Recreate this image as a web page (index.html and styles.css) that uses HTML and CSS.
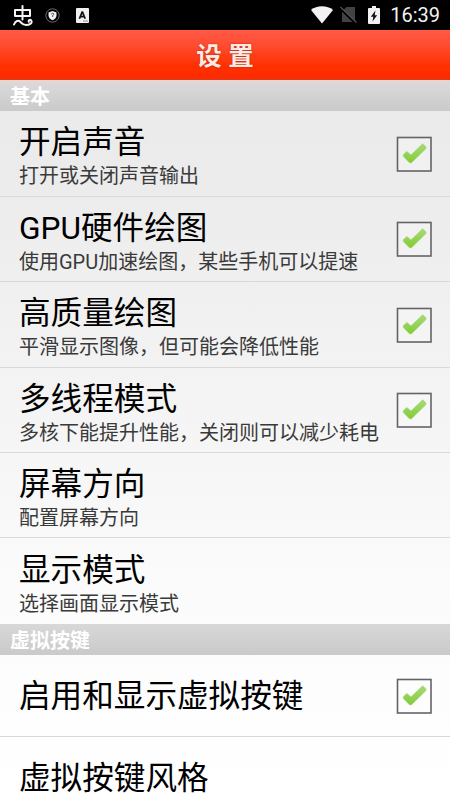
FILE: index.html
```html
<!DOCTYPE html>
<html lang="zh-CN">
<head>
<meta charset="utf-8">
<title>设置</title>
<link rel="stylesheet" href="styles.css">
</head>
<body>
<svg width="0" height="0" class="defs" aria-hidden="true">
  <defs>
    <linearGradient id="green" x1="0" y1="0" x2="0" y2="1">
      <stop offset="0" stop-color="#a9d97c"/><stop offset="1" stop-color="#82cc35"/>
    </linearGradient>
    <symbol id="check" viewBox="0 0 36 36">
      <rect x="1.5" y="1.500" width="33.500" height="33.500" fill="#fff" fill-opacity=".25" stroke="#646468" stroke-width="1.600"/>
      <path d="M7.300 18.700 10.800 15.400 15 18.900 26.700 7.700 30.100 10.900 29.800 12.700 15.300 26.900 13.400 26.700 7.400 20.600Z" fill="url(#green)" stroke="#9bd663" stroke-width=".6" stroke-linejoin="round"/>
    </symbol>
  </defs>
</svg>
<div class="statusbar">
  <svg class="bug" viewBox="0 0 21 22" fill="none" stroke="#f4f4f4" stroke-width="2" stroke-linecap="round" stroke-linejoin="round">
    <path d="M3 6H18V12H3ZM10.500 2V15.500M2 20.500C3.500 16.500 6.500 16 8.500 18C10.200 19.800 11 21 14 21C17.500 21 20.300 19.500 19.500 17C18.800 15 16 15.800 16.800 17.800"/>
  </svg>
  <svg class="shield" viewBox="0 0 15 15">
    <circle cx="7.500" cy="7.500" r="6.700" fill="none" stroke="#777" stroke-width=".9"/>
    <path d="M3.500 4.500 7.500 3 11.500 4.500V7.500C11.500 9.800 9.600 11.300 7.500 12.300C5.400 11.300 3.500 9.800 3.500 7.500Z" fill="#f2f2f2"/>
    <path d="M6.500 6.300A1.100 1.100 0 1 1 7.700 7.300V9" fill="none" stroke="#333" stroke-width=".8"/>
  </svg>
  <svg class="abox" viewBox="0 0 13 15">
    <rect width="13" height="15" rx="1" fill="#f0f0f0"/>
    <path d="M3.400 10.800 6.100 4.200H6.500L9.200 10.800M4.500 8.700H8.100" fill="none" stroke="#111" stroke-width="1.700"/>
    <path d="M7 13H12" stroke="#777" stroke-width=".8"/>
  </svg>
  <svg class="wifi" viewBox="0 0 22 18"><path d="M0 4C5.500-1 16.500-1 22 4L11 17.500Z" fill="#f2f2f2"/></svg>
  <svg class="nosim" viewBox="0 0 17 18">
    <path d="M2 5.500 6.500 1H15V16H2Z" fill="#424242"/>
    <path d="M0 2 16 17.500" stroke="#000" stroke-width="2.600"/>
    <path d="M.5 1 16.500 16.500" stroke="#555" stroke-width="1.200"/>
  </svg>
  <svg class="battery" viewBox="0 0 12 18">
    <path d="M4 0H8V2H11Q12 2 12 3V17Q12 18 11 18H1Q0 18 0 17V3Q0 2 1 2H4Z" fill="#f2f2f2"/>
    <path d="M7.500 4.500 2.800 10.700H5.300L4.500 15.500 9.200 9.300H6.700Z" fill="#111"/>
  </svg>
  <span class="clock">16:39</span>
</div>
<header class="titlebar">设 置</header>
<main class="settings">
  <h2 class="section first">基本</h2>
  <div class="row"><div class="text"><div class="name">开启声音</div><div class="hint">打开或关闭声音输出</div></div><svg class="box"><use href="#check"/></svg></div>
  <div class="row"><div class="text"><div class="name">GPU硬件绘图</div><div class="hint">使用GPU加速绘图，某些手机可以提速</div></div><svg class="box"><use href="#check"/></svg></div>
  <div class="row"><div class="text"><div class="name">高质量绘图</div><div class="hint">平滑显示图像，但可能会降低性能</div></div><svg class="box"><use href="#check"/></svg></div>
  <div class="row"><div class="text"><div class="name">多线程模式</div><div class="hint">多核下能提升性能，关闭则可以减少耗电</div></div><svg class="box"><use href="#check"/></svg></div>
  <div class="row"><div class="text"><div class="name">屏幕方向</div><div class="hint">配置屏幕方向</div></div></div>
  <div class="row last"><div class="text"><div class="name">显示模式</div><div class="hint">选择画面显示模式</div></div></div>
  <h2 class="section">虚拟按键</h2>
  <div class="row single"><div class="text"><div class="name">启用和显示虚拟按键</div></div><svg class="box"><use href="#check"/></svg></div>
  <div class="row single"><div class="text"><div class="name">虚拟按键风格</div></div></div>
</main>
</body>
</html>
```

FILE: styles.css
```css
* { box-sizing: border-box; }
body {
  margin: 0;
  width: 450px;
  height: 800px;
  overflow: hidden;
  display: flex;
  flex-direction: column;
  font-family: Roboto, "Noto Sans CJK SC", sans-serif;
  background: #fff;
}
.defs { position: absolute; }
.statusbar {
  flex: none;
  height: 30px;
  background: #000;
  display: flex;
  align-items: center;
  padding: 0 10px 0 12px;
}
.bug { width: 21px; height: 22px; }
.shield { width: 15px; height: 15px; margin-left: 12px; }
.abox { width: 13px; height: 15px; margin-left: 16px; }
.wifi { width: 22px; height: 18px; margin-left: auto; }
.nosim { width: 17px; height: 18px; margin-left: 7px; }
.battery { width: 12px; height: 18px; margin-left: 11px; }
.clock { margin-left: 10px; color: #f2f2f2; font-size: 20px; line-height: 31px; }
.titlebar {
  flex: none;
  height: 50px;
  padding-top: 1px;
  border-bottom: 1px solid #d93a20;
  background: linear-gradient(#ff5a48, #ff4a2c 35%, #ff3000 75%, #fb2b00);
  color: #ffe9e3;
  font-size: 25.500px;
  font-weight: 700;
  line-height: 50px;
  text-align: center;
  text-shadow: 0 0 2px #a02a15;
}
.settings {
  flex: 1;
  min-height: 0;
  overflow: hidden;
  background: linear-gradient(#eaeaea, #ececec 15%, #fcfcfc 75%, #fff);
}
.section {
  margin: 0;
  height: 31px;
  padding: 2px 0 0 10px;
  background: linear-gradient(#d8d8d8, #cacaca);
  color: #fff;
  font-size: 20px;
  font-weight: 700;
  line-height: 31px;
}
.first {
  height: 31.400px;
  background: linear-gradient(#ecd4ce, #d9d9d9 4px, #cacaca);
}
.row {
  height: 85.400px;
  border-bottom: 1px solid #d9d9d9;
  padding: 1px 18px 0 19px;
  display: flex;
  align-items: center;
  justify-content: space-between;
}
.last { border-bottom: 0; }
.single { height: 82px; }
.text { white-space: nowrap; padding-top: 5.500px; }
.single .text { padding-top: 3px; }
.name { color: #000; font-size: 31.600px; line-height: 40px; }
.hint { color: #3a3a3a; font-size: 20px; line-height: 27px; }
.box { flex: none; width: 36px; height: 36px; }
```
